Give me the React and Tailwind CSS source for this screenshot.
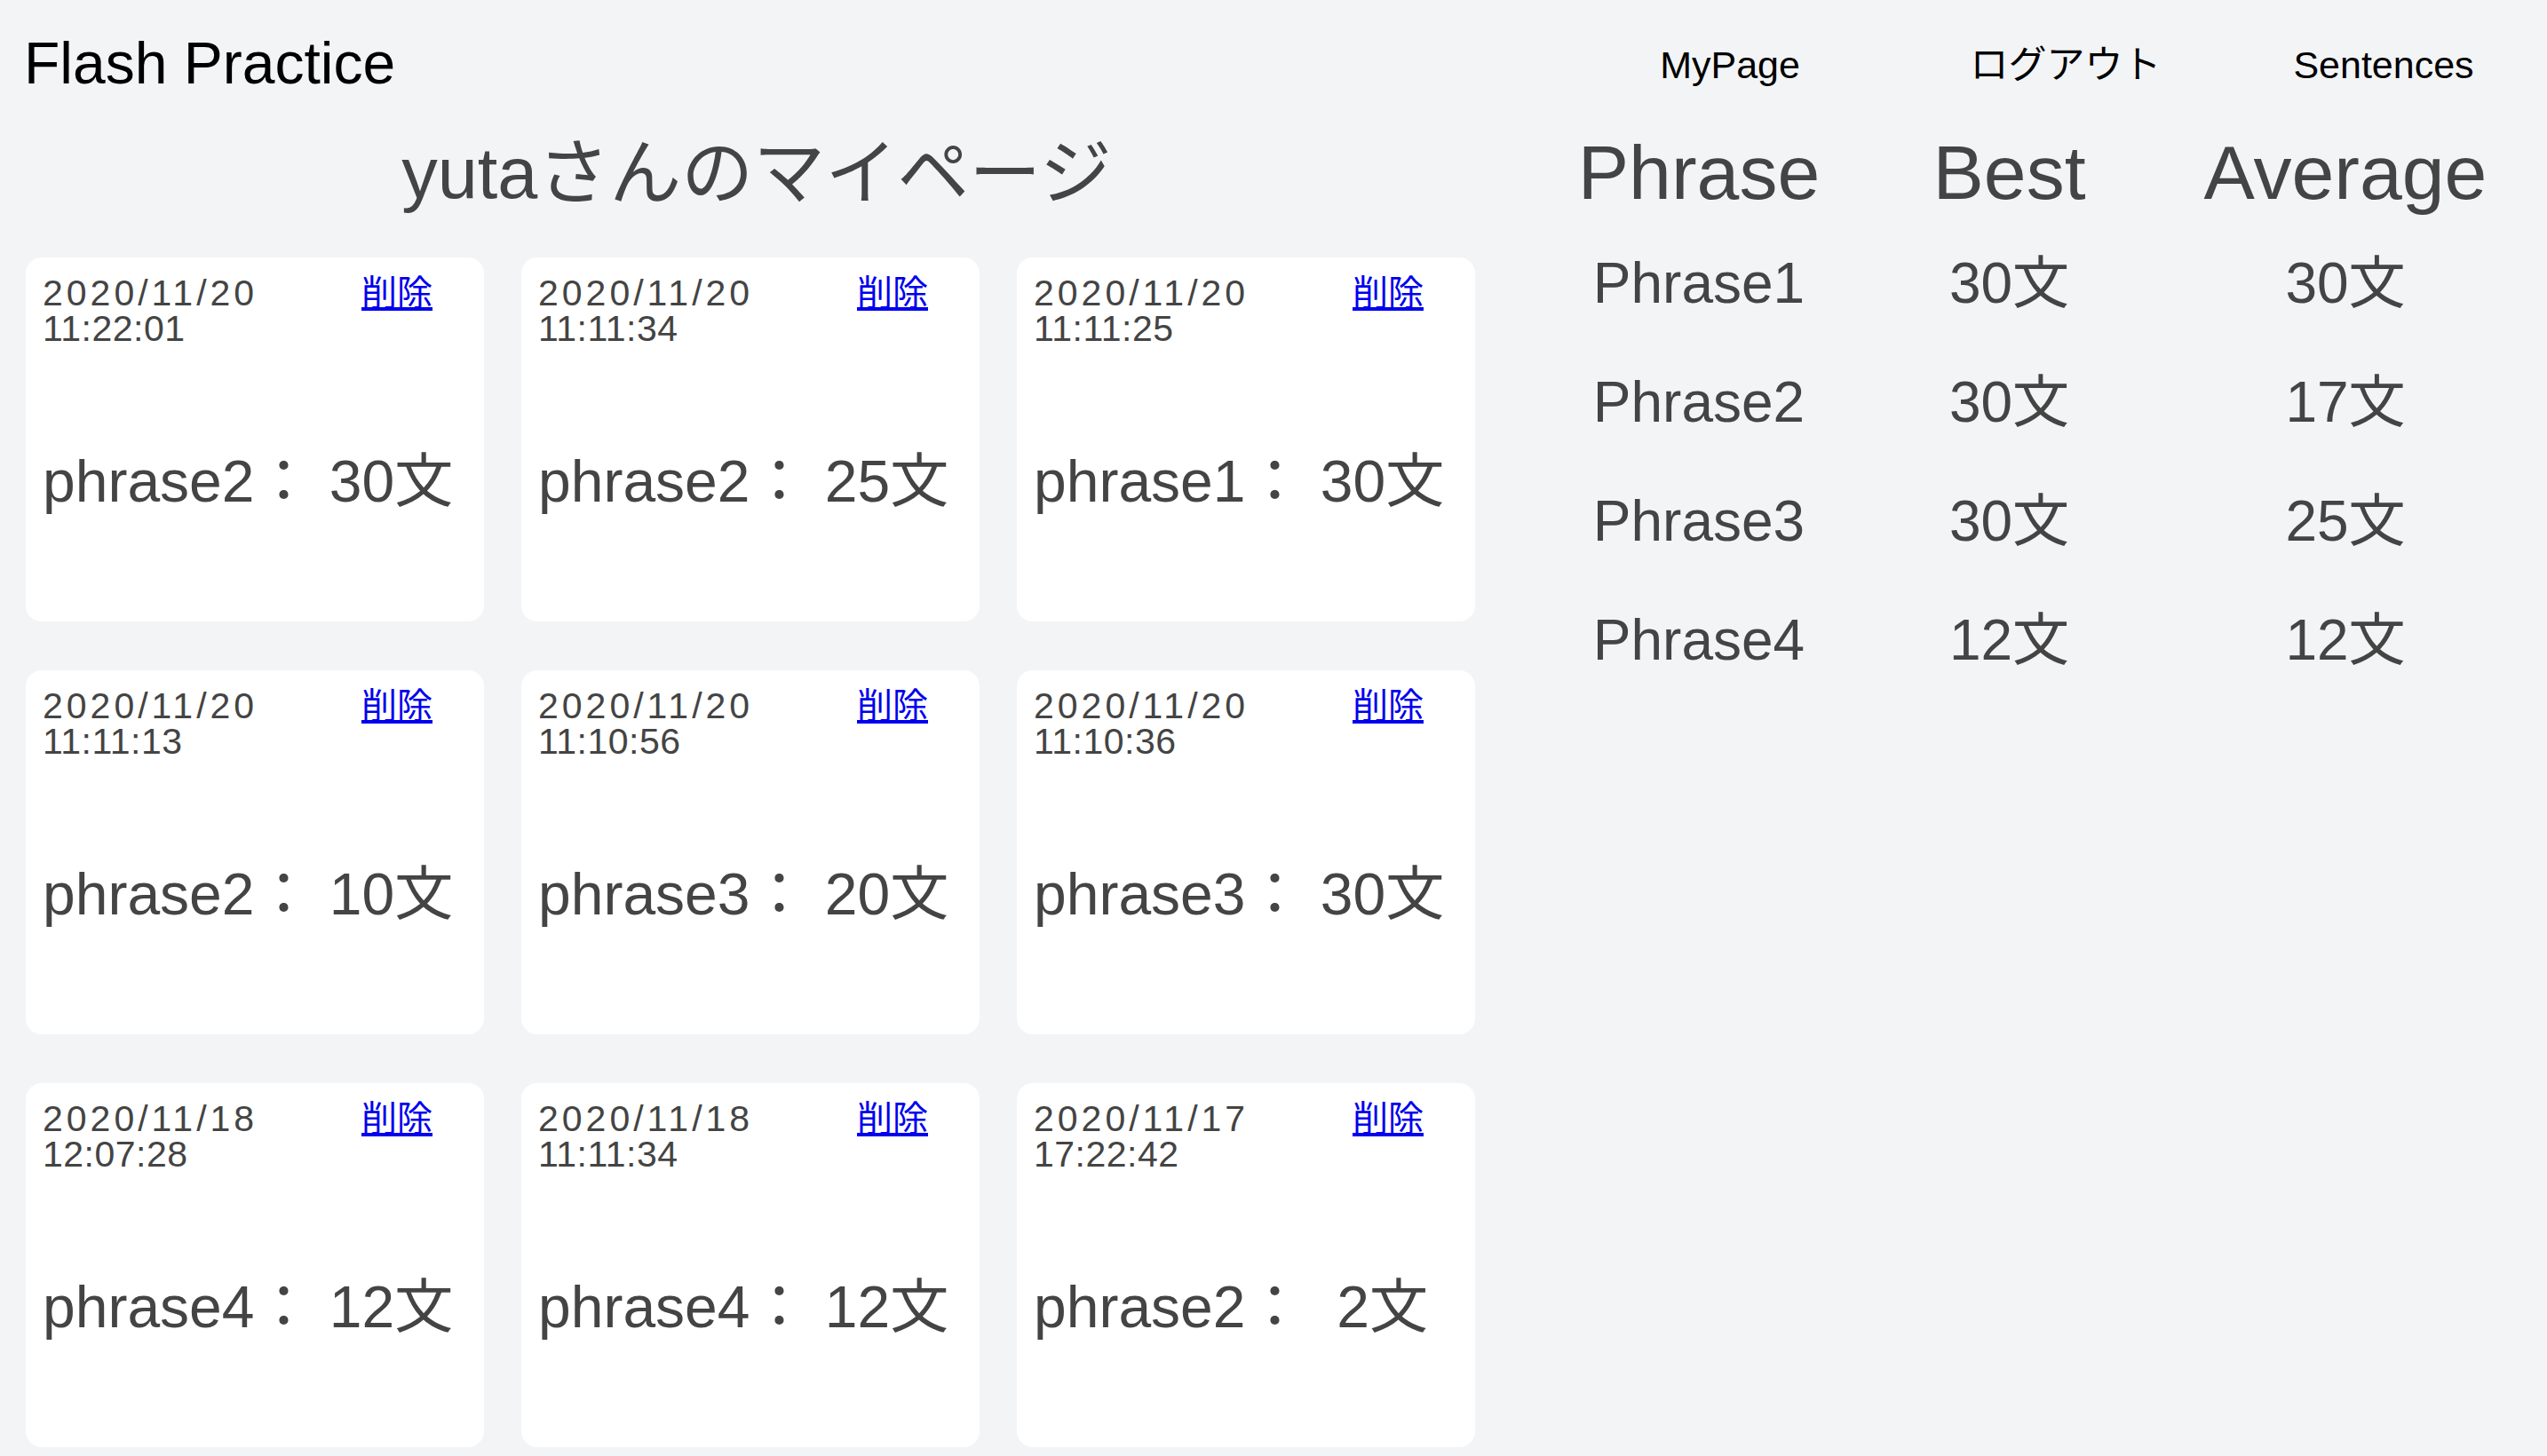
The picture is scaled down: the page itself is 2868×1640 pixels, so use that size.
const CARDS = [
  { date: '2020/11/20', time: '11:22:01', phrase: 'phrase2', count: ' 30文' },
  { date: '2020/11/20', time: '11:11:34', phrase: 'phrase2', count: ' 25文' },
  { date: '2020/11/20', time: '11:11:25', phrase: 'phrase1', count: ' 30文' },
  { date: '2020/11/20', time: '11:11:13', phrase: 'phrase2', count: ' 10文' },
  { date: '2020/11/20', time: '11:10:56', phrase: 'phrase3', count: ' 20文' },
  { date: '2020/11/20', time: '11:10:36', phrase: 'phrase3', count: ' 30文' },
  { date: '2020/11/18', time: '12:07:28', phrase: 'phrase4', count: ' 12文' },
  { date: '2020/11/18', time: '11:11:34', phrase: 'phrase4', count: ' 12文' },
  { date: '2020/11/17', time: '17:22:42', phrase: 'phrase2', count: '\u00a0\u00a02文' },
];

const STATS = [
  { name: 'Phrase1', best: '30文', avg: '30文' },
  { name: 'Phrase2', best: '30文', avg: '17文' },
  { name: 'Phrase3', best: '30文', avg: '25文' },
  { name: 'Phrase4', best: '12文', avg: '12文' },
];

const FONT = "font-['Liberation_Sans','Noto_Sans_CJK_JP',sans-serif]";

const Card = ({ card }) => (
  <div className="h-[410px] rounded-[18px] bg-white pt-[20px] pl-[19px] pr-[58px] text-[#444]">
    <div className="flex justify-between items-start">
      <div className="text-[41px] leading-[40px]">
        <div className="tracking-[4px]">{card.date}</div>
        <div className="tracking-[0.5px]">{card.time}</div>
      </div>
      <a href="#" className="block text-[40px] leading-[40px] text-[#0000ee] underline">削除</a>
    </div>
    <div className="mt-[119px] text-[66px] leading-[66px] whitespace-pre">
      {card.phrase}：{card.count}
    </div>
  </div>
);

export default function App() {
  return (
    <div className={`min-h-screen bg-[#f3f4f6] ${FONT}`}>
      <header className="flex justify-between h-[130px]">
        <div className="pl-[27px] pt-[38px] text-[66px] leading-[66px] text-black">Flash Practice</div>
        <nav className="flex pt-[52px] pr-[16px] text-[43px] leading-[43px] text-black">
          <a href="#" className="w-[376px] text-center">MyPage</a>
          <a href="#" className="w-[380px] text-center">ログアウト</a>
          <a href="#" className="w-[336px] text-center">Sentences</a>
        </nav>
      </header>

      <main className="flex justify-between">
        <section className="pl-[29px]">
          <h1 className="w-[1632px] text-center text-[81px] leading-[80px] text-[#444] pt-[25px] pb-[55px] pl-[14px]">
            yutaさんのマイページ
          </h1>
          <div className="grid grid-cols-[516px_516px_516px] gap-x-[42px] gap-y-[55px]">
            {CARDS.map((c, i) => <Card key={i} card={c} />)}
          </div>
        </section>

        <section className="grid grid-cols-[396px_303px_454px] auto-rows-min text-center text-[#444]">
          <div className="text-[86px] leading-[84px] pt-[22px] pb-[16px]">Phrase</div>
          <div className="text-[86px] leading-[84px] pt-[22px] pb-[16px]">Best</div>
          <div className="text-[86px] leading-[84px] pt-[22px] pb-[16px]">Average</div>
          {STATS.map(s => (
            <div key={s.name} className="contents">
              <div className="text-[64px] leading-[64px] py-[35px]">{s.name}</div>
              <div className="text-[64px] leading-[64px] py-[35px]">{s.best}</div>
              <div className="text-[64px] leading-[64px] py-[35px]">{s.avg}</div>
            </div>
          ))}
        </section>
      </main>
    </div>
  );
}
